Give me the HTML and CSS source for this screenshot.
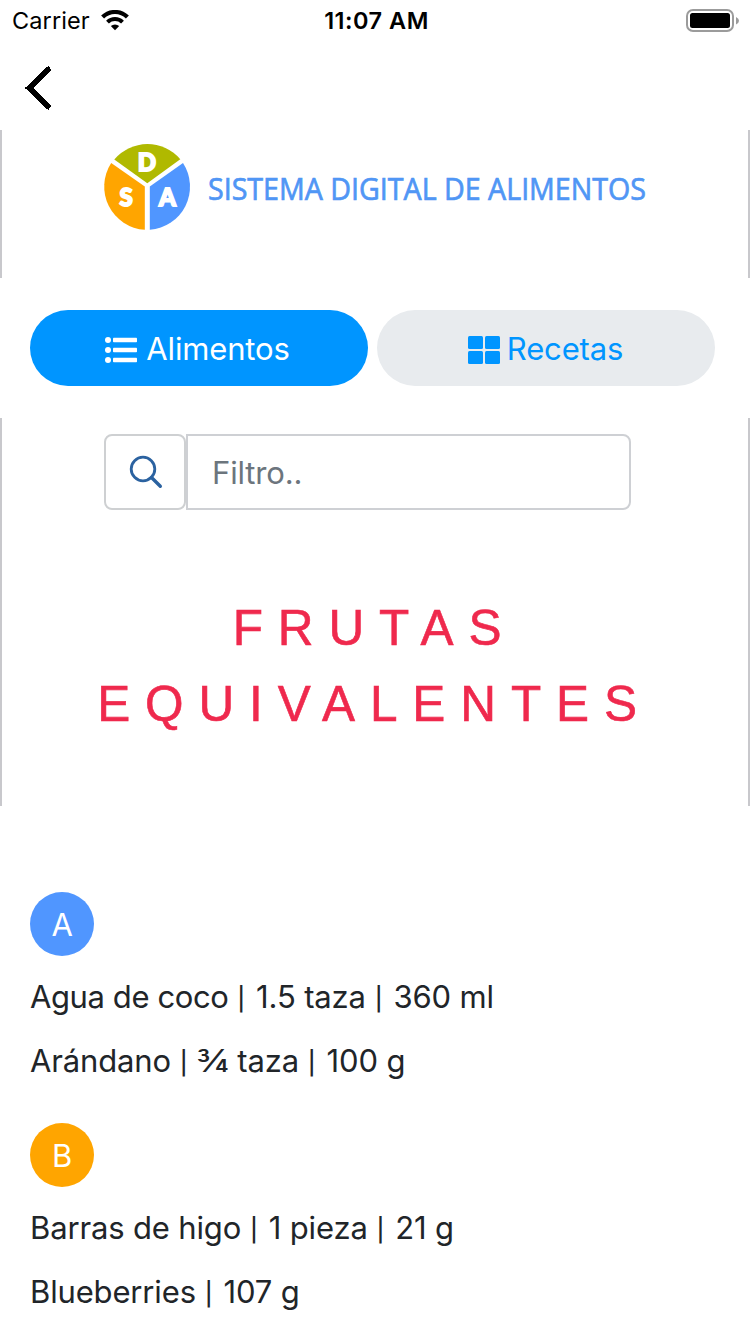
FILE: index.html
```html
<!DOCTYPE html>
<html lang="es">
<head>
<meta charset="utf-8">
<title>Sistema Digital de Alimentos</title>
<link rel="stylesheet" href="styles.css">
</head>
<body>
<header class="status">
  <div class="status-left">
    <span class="carrier">Carrier</span>
    <svg class="wifi" width="28" height="21" viewBox="0 0 28 21">
      <path d="M1.6 7.1A17.6 17.6 0 0 1 26.4 7.1" fill="none" stroke="#000" stroke-width="4.2"/>
      <path d="M6.5 12.1A10.7 10.7 0 0 1 21.5 12.1" fill="none" stroke="#000" stroke-width="4"/>
      <path d="M14 20.3L9.8 16.1A6.1 6.1 0 0 1 18.2 16.1Z"/>
    </svg>
  </div>
  <span class="time">11:07 AM</span>
  <svg class="battery" width="54" height="24" viewBox="0 0 54 24">
    <rect x="1" y="1" width="46" height="21" rx="6" fill="none" stroke="#9b9b9b" stroke-width="2"/>
    <rect x="4" y="4" width="40" height="15" rx="2.5"/>
    <path d="M50 8Q53 9.5 53 11.7T50 15.5Z" fill="#9b9b9b"/>
  </svg>
</header>
<nav class="navbar">
  <svg class="back" width="30" height="46" viewBox="0 0 30 46" shape-rendering="crispEdges">
    <path d="M26 3L5 23L26 43" fill="none" stroke="#000" stroke-width="5.6"/>
  </svg>
</nav>
<section class="panel brand">
  <svg class="logo" width="546" height="88" viewBox="0 0 546 88">
    <g>
      <path d="M40.8 85.8A43.3 43.3 0 0 1 7.2 19L40.8 42.6Z" fill="#ffa500"/>
      <path d="M45.8 85.8A43.3 43.3 0 0 0 79 19L45.8 42.6Z" fill="#5096ff"/>
      <path d="M43.3 39.3L10.3 15.5A43.3 43.3 0 0 1 76.3 15.2Z" fill="#b0b900"/>
    </g>
    <text class="logo-letter" x="43" y="26.8">D</text>
    <text class="logo-letter" x="22" y="62">S</text>
    <text class="logo-letter" x="63.5" y="62">A</text>
    <text class="logo-name" x="104" y="55.7" textLength="438" lengthAdjust="spacingAndGlyphs">SISTEMA DIGITAL DE ALIMENTOS</text>
  </svg>
</section>
<div class="tabs">
  <div class="tab active">
    <svg width="32" height="28" viewBox="0 0 32 28" fill="#fff">
      <circle cx="3" cy="4" r="3"/><circle cx="3" cy="14" r="3"/><circle cx="3" cy="24" r="3"/>
      <rect x="8" y="1.8" width="24" height="4.4" rx=".8"/><rect x="8" y="11.8" width="24" height="4.4" rx=".8"/><rect x="8" y="21.8" width="24" height="4.4" rx=".8"/>
    </svg>
    <span class="tab-label">Alimentos</span>
  </div>
  <div class="tab grid">
    <svg width="32" height="28" viewBox="0 0 32 28" fill="#0095ff">
      <rect width="15" height="13" rx="1.5"/><rect x="17" width="15" height="13" rx="1.5"/>
      <rect y="15" width="15" height="13" rx="1.5"/><rect x="17" y="15" width="15" height="13" rx="1.5"/>
    </svg>
    <span class="tab-label">Recetas</span>
  </div>
</div>
<section class="panel main">
  <div class="search">
    <div class="search-icon">
      <svg width="34" height="34" viewBox="0 0 34 34" fill="none" stroke="#2b62a0">
        <circle cx="14" cy="14" r="11.8" stroke-width="2.8"/>
        <path d="M22.5 22.5L31.3 31.2" stroke-width="3.4" stroke-linecap="round"/>
      </svg>
    </div>
    <div class="search-field">Filtro..</div>
  </div>
  <h1 class="title">FRUTAS<br>EQUIVALENTES</h1>
</section>
<main class="groups">
  <section class="group">
    <div class="badge blue">A</div>
    <p class="item"><span class="tight">Agua de coco</span> <span class="bar">|</span> 1.5 taza <span class="bar">|</span> 360 ml</p>
    <p class="item">Arándano <span class="bar">|</span> <span class="fraction">¾</span> taza <span class="bar">|</span> 100 g</p>
  </section>
  <section class="group">
    <div class="badge orange">B</div>
    <p class="item">Barras de higo <span class="bar">|</span> 1 pieza <span class="bar">|</span> 21 g</p>
    <p class="item">Blueberries <span class="bar">|</span> 107 g</p>
  </section>
</main>
</body>
</html>
```
FILE: styles.css
```css
* { box-sizing: border-box; }
body {
  margin: 0;
  width: 750px;
  height: 1334px;
  overflow: hidden;
  background: #fff;
  color: #212529;
  font-family: Inter, "Liberation Sans", sans-serif;
  font-size: 31px;
  letter-spacing: -0.15px;
}
svg { display: block; flex: none; }
.status {
  display: grid;
  grid-template-columns: 1fr auto 1fr;
  align-items: center;
  height: 40px;
  padding: 1px 10px 0 12px;
  color: #000;
  font-size: 23.5px;
}
.status-left { display: flex; align-items: center; gap: 11px; }
.carrier { letter-spacing: 0.1px; }
.time { padding-left: 1px; font-weight: 600; font-size: 23.5px; letter-spacing: 0.5px; }
.battery { justify-self: end; }
.navbar { height: 90px; padding: 25px 24px 0; }
.panel { border: solid #c8c8cc; border-width: 0 2px; }
.brand { height: 148px; padding: 14px 0 0 102px; }
.logo { overflow: visible; letter-spacing: 0; }
.logo-letter {
  fill: #fff;
  font: 900 24px Lato, sans-serif;
  text-anchor: middle;
  stroke: #fff;
  stroke-width: 1.8px;
}
.logo-name {
  fill: #5096f5;
  font: 400 31px "Open Sans", sans-serif;
  stroke: #5096f5;
  stroke-width: .7px;
}
.tabs {
  display: grid;
  grid-template-columns: 338px 338px;
  gap: 9px;
  height: 140px;
  padding: 32px 35px 32px 30px;
}
.tab {
  display: flex;
  align-items: center;
  justify-content: center;
  gap: 9px;
  height: 76px;
  padding: 3px 3px 0 0;
  border-radius: 38px;
  background: #e8ebee;
  color: #0095ff;
}
.tab.active { background: #0095ff; color: #fff; }
.tab.grid { gap: 7px; padding-right: 1px; }
.tab-label { padding-bottom: 2px; }
.main { height: 388px; padding-top: 16px; }
.search { display: flex; height: 76px; padding-left: 102px; }
.search-icon {
  display: flex;
  align-items: center;
  justify-content: center;
  width: 82px;
  padding-left: 2px;
  border: 2px solid #ced0d2;
  border-radius: 8px;
}
.search-field {
  width: 445px;
  padding-left: 24px;
  border: 2px solid #ced0d4;
  border-radius: 0 8px 8px 0;
  color: #6c757d;
  line-height: 74px;
}
.title {
  margin: 80px 0 0;
  padding-right: 1px;
  color: #ef294d;
  font: 400 49.5px/76px "Liberation Sans", sans-serif;
  letter-spacing: 14.9px;
  text-align: center;
  -webkit-text-stroke: .6px #ef294d;
}
.groups { padding: 86px 30px 0; }
.group { height: 231px; }
.badge {
  display: flex;
  align-items: center;
  justify-content: center;
  width: 64px;
  height: 64px;
  padding-top: 1px;
  margin-bottom: 9px;
  border-radius: 50%;
  color: #fff;
}
.blue { background: #5096ff; }
.orange { background: #ffa500; }
.item { margin: 0; height: 64px; line-height: 64px; white-space: nowrap; }
.tight { letter-spacing: -0.4px; }
.bar {
  display: inline-block;
  width: 10.5px;
  margin: 0 1px 0 -1px;
  font-size: 23px;
  font-weight: 500;
  line-height: 1;
  text-align: center;
  vertical-align: 1px;
}
.fraction {
  display: inline-block;
  margin: 0 3px 0 0;
  line-height: 1;
  transform: scaleX(1.2);
}
```
